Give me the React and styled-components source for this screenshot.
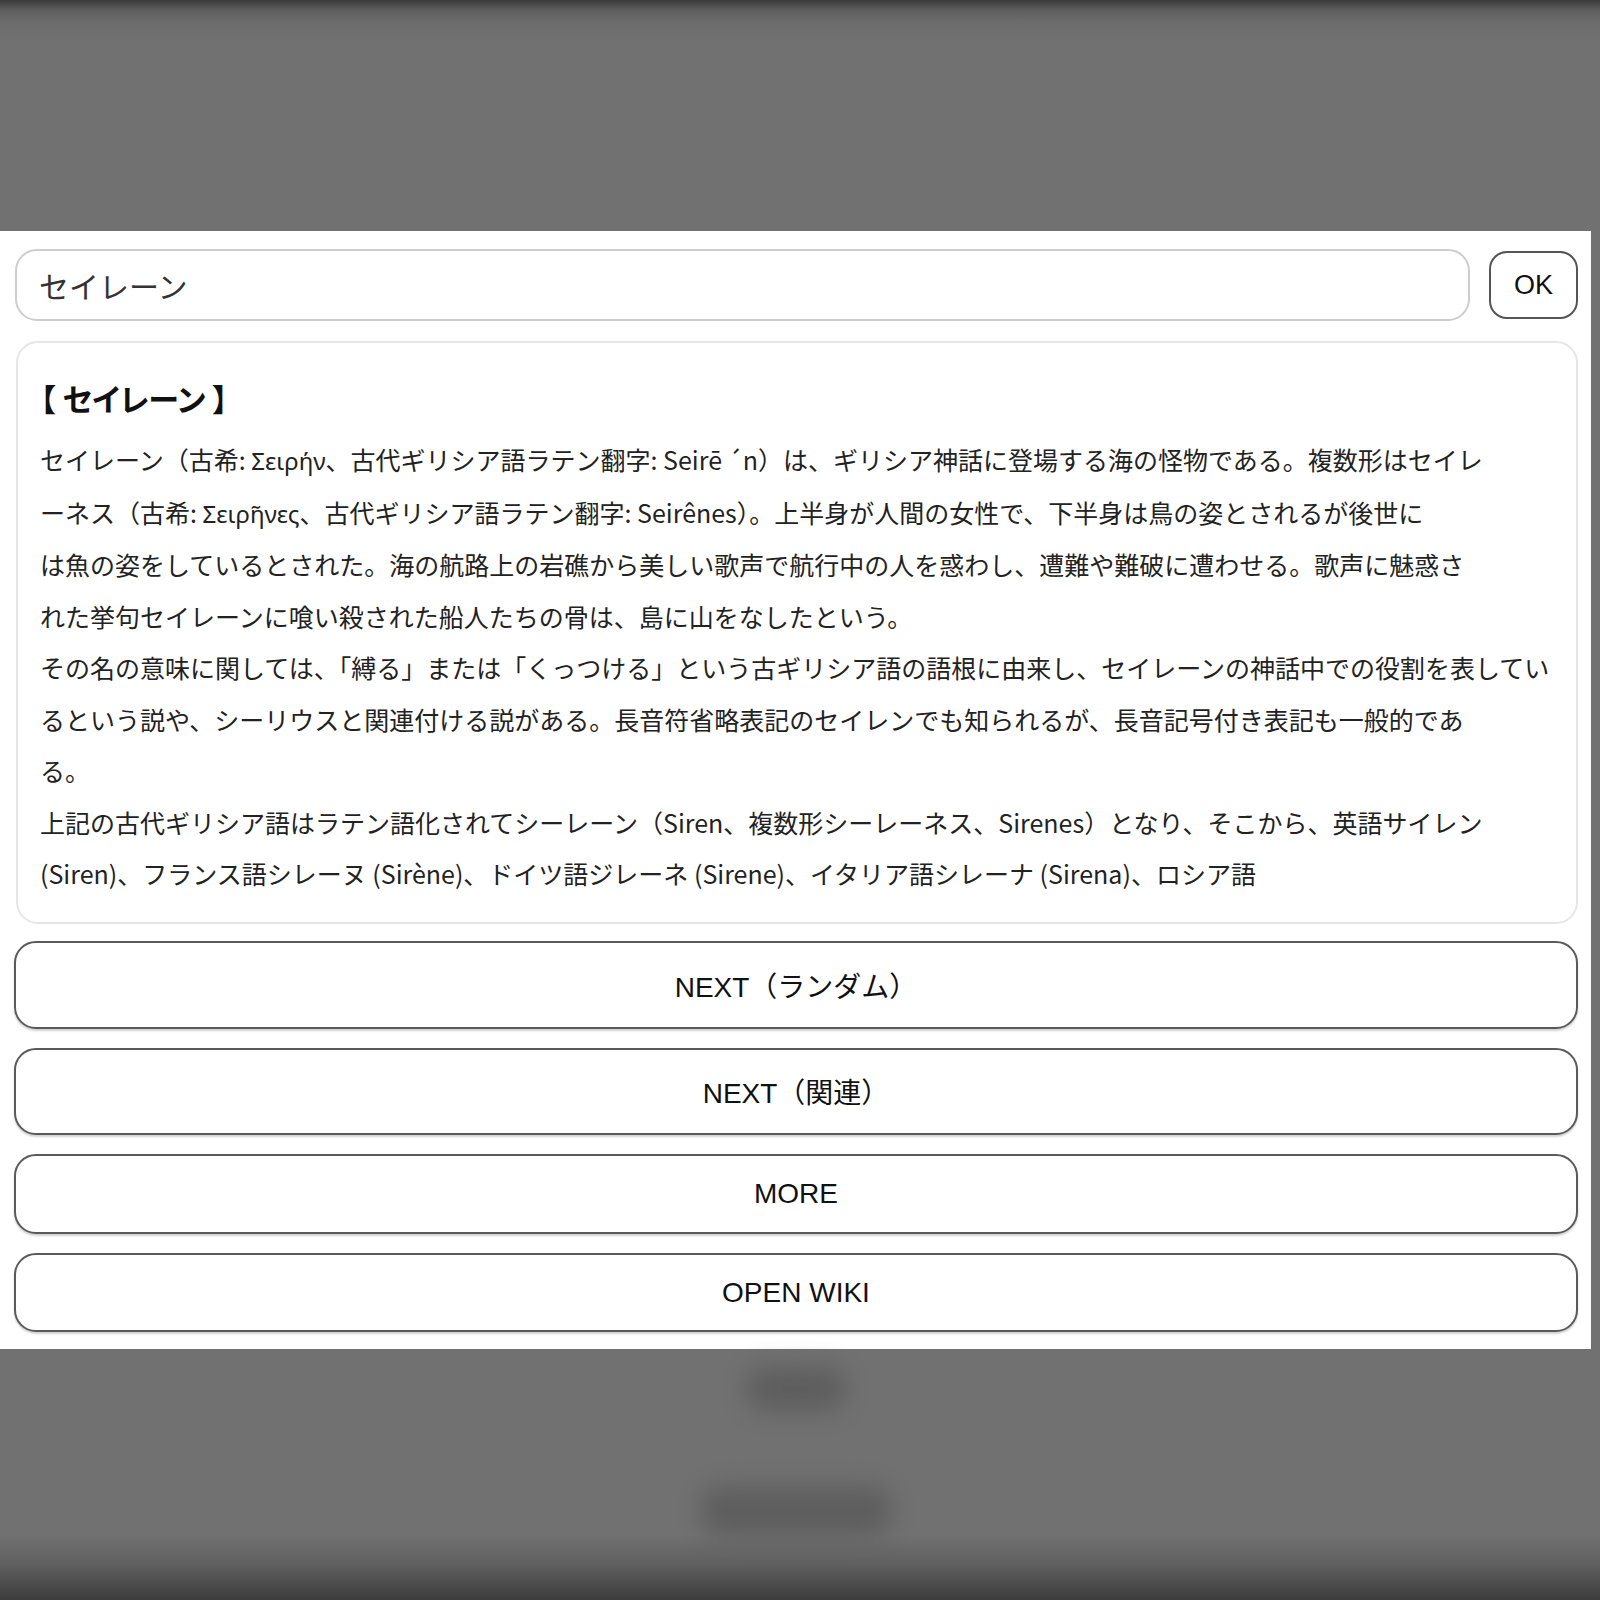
import React from "react";
import styled, { createGlobalStyle } from "styled-components";

const GlobalStyle = createGlobalStyle`
  html, body {
    margin: 0;
    padding: 0;
  }
  body {
    min-height: 1600px;
    background: linear-gradient(
      to bottom,
      #3a3a3a 0px,
      #5e5e5e 10px,
      #6c6c6c 22px,
      #717171 40px,
      #717171 1535px,
      #5f5f5f 1565px,
      #3c3c3c 1600px
    );
    font-family: "Noto Sans CJK JP", "Noto Sans", sans-serif;
  }
  * { box-sizing: border-box; }
`;

const Page = styled.div`
  width: 1591px;
  display: flex;
  flex-direction: column;
`;

const TopBackdrop = styled.div`
  height: 231px;
`;

const Panel = styled.main`
  background: #ffffff;
  padding: 18px 13px 17px 14px;
  display: flex;
  flex-direction: column;
`;

const SearchRow = styled.div`
  display: flex;
  align-items: center;
  gap: 19px;
`;

const SearchInput = styled.input`
  flex: 1;
  min-width: 0;
  height: 72px;
  margin-left: 1px;
  border: 2px solid #cdcdcd;
  border-radius: 22px;
  padding: 0 22px;
  font-family: "Noto Sans CJK JP", sans-serif;
  font-size: 30px;
  color: #333;
  background: #fff;
  outline: none;
`;

const OkButton = styled.button`
  width: 89px;
  height: 68px;
  border: 2px solid #555;
  border-radius: 18px;
  background: #fff;
  font-family: "Liberation Sans", Arial, sans-serif;
  font-size: 27px;
  color: #111;
  padding: 0;
  cursor: pointer;
`;

const Card = styled.section`
  margin-top: 20px;
  margin-left: 2px;
  border: 2px solid #e6e6e6;
  border-radius: 22px;
  padding: 30px 22px 22px 22px;
`;

const Title = styled.h2`
  margin: 0;
  font-size: 31px;
  line-height: 50px;
  font-weight: 700;
  color: #111;
  font-feature-settings: "palt";
  font-family: "Noto Sans CJK JP", sans-serif;
`;

const Body = styled.div`
  margin-top: 11px;
  color: #222;
  font-size: 25px;
  line-height: 51.5px;
  font-family: "Noto Sans CJK JP", sans-serif;
  white-space: nowrap;
`;

const Para = styled.p`
  margin: 0;
`;

const Greek = styled.span`
  font-family: "Noto Sans", "DejaVu Sans", sans-serif;
  font-size: 24px;
`;

const ActionList = styled.div`
  margin-top: 17.5px;
  display: flex;
  flex-direction: column;
  gap: 19px;
`;

const ActionButton = styled.button`
  width: 100%;
  border: 2px solid #5a5a5a;
  border-radius: 22px;
  background: #fff;
  padding: 21.8px 0;
  font-family: "Liberation Sans", Arial, "Noto Sans CJK JP", sans-serif;
  font-size: 28px;
  color: #111;
  box-shadow: 0 2px 2px rgba(0, 0, 0, 0.18);
  cursor: pointer;
`;

const BottomBackdrop = styled.div`
  display: flex;
  flex-direction: column;
  align-items: center;
`;

const BlurBlob = styled.div`
  width: ${(p) => p.$w}px;
  height: ${(p) => p.$h}px;
  margin-top: ${(p) => p.$mt}px;
  background: #565656;
  border-radius: 20px;
  filter: blur(12px);
  opacity: 0.7;
`;

const paragraphs = [
  [
    <>
      セイレーン（古希: <Greek>Σειρήν</Greek>、古代ギリシア語ラテン翻字: Seirē ´n）は、ギリシア神話に登場する海の怪物である。複数形はセイレ
    </>,
    <>
      ーネス（古希: <Greek>Σειρῆνες</Greek>、古代ギリシア語ラテン翻字: Seirênes）。上半身が人間の女性で、下半身は鳥の姿とされるが後世に
    </>,
    "は魚の姿をしているとされた。海の航路上の岩礁から美しい歌声で航行中の人を惑わし、遭難や難破に遭わせる。歌声に魅惑さ",
    "れた挙句セイレーンに喰い殺された船人たちの骨は、島に山をなしたという。",
  ],
  [
    "その名の意味に関しては、「縛る」または「くっつける」という古ギリシア語の語根に由来し、セイレーンの神話中での役割を表してい",
    "るという説や、シーリウスと関連付ける説がある。長音符省略表記のセイレンでも知られるが、長音記号付き表記も一般的であ",
    "る。",
  ],
  [
    "上記の古代ギリシア語はラテン語化されてシーレーン（Siren、複数形シーレーネス、Sirenes）となり、そこから、英語サイレン",
    "(Siren)、フランス語シレーヌ (Sirène)、ドイツ語ジレーネ (Sirene)、イタリア語シレーナ (Sirena)、ロシア語",
  ],
];

const actions = ["NEXT（ランダム）", "NEXT（関連）", "MORE", "OPEN WIKI"];

export default function App() {
  return (
    <>
      <GlobalStyle />
      <Page>
        <TopBackdrop />
        <Panel>
          <SearchRow>
            <SearchInput defaultValue="セイレーン" />
            <OkButton>OK</OkButton>
          </SearchRow>
          <Card>
            <Title>【 セイレーン 】</Title>
            <Body>
              {paragraphs.map((lines, i) => (
                <Para key={i}>
                  {lines.map((line, j) => (
                    <React.Fragment key={j}>
                      {line}
                      {j < lines.length - 1 && <br />}
                    </React.Fragment>
                  ))}
                </Para>
              ))}
            </Body>
          </Card>
          <ActionList>
            {actions.map((a) => (
              <ActionButton key={a}>{a}</ActionButton>
            ))}
          </ActionList>
        </Panel>
        <BottomBackdrop>
          <BlurBlob $w={100} $h={44} $mt={18} />
          <BlurBlob $w={190} $h={50} $mt={75} />
        </BottomBackdrop>
      </Page>
    </>
  );
}
